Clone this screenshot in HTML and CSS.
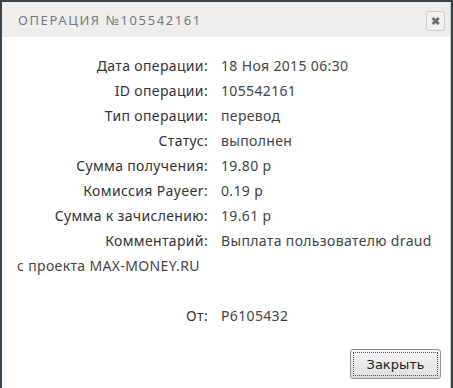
FILE: index.html
```html
<!DOCTYPE html>
<html lang="ru">
<head>
    <meta charset="UTF-8">
    <title>Операция №105542161</title>
    <link rel="stylesheet" href="styles.css">
</head>
<body>
    <div class="dialog">
        <div class="dialog-header">
            <h2>Операция №105542161</h2>
            <button class="close-btn" title="Закрыть">&#10006;</button>
        </div>
        <div class="dialog-body">
            <div class="row"><span class="label">Дата операции:</span>18 Ноя 2015 06:30</div>
            <div class="row"><span class="label">ID операции:</span>105542161</div>
            <div class="row"><span class="label">Тип операции:</span>перевод</div>
            <div class="row"><span class="label">Статус:</span>выполнен</div>
            <div class="row"><span class="label">Сумма получения:</span>19.80 р</div>
            <div class="row"><span class="label">Комиссия Payeer:</span>0.19 р</div>
            <div class="row"><span class="label">Сумма к зачислению:</span>19.61 р</div>
            <div class="row"><span class="label">Комментарий:</span>Выплата пользователю draud<br>с проекта MAX-MONEY.RU</div>
            <div class="row empty"></div>
            <div class="row"><span class="label">От:</span>P6105432</div>
        </div>
        <div class="dialog-footer">
            <button class="btn">Закрыть</button>
        </div>
    </div>
</body>
</html>
```

FILE: styles.css
```css
body {
    margin: 0;
    background: #37464e;
    font-family: "Noto Sans", Arial, sans-serif;
}

.dialog {
    margin: 2px 2px 0 2px;
    height: 386px;
    background: white;
    border-right: 1px solid #c8c8c8;
    display: flex;
    flex-direction: column;
}

.dialog-header {
    background: #eeeeee;
    height: 35px;
    display: flex;
    align-items: center;
    padding: 0 5px 0 16px;
}

.dialog-header h2 {
    margin: 0;
    flex: 1;
    font-size: 13px;
    font-weight: normal;
    text-transform: uppercase;
    letter-spacing: 1.6px;
    color: #7a7a7a;
}

.close-btn {
    width: 19px;
    height: 20px;
    margin-top: 2px;
    padding: 0;
    border: 1px solid #cfcfcf;
    border-radius: 3px;
    background: #f2f2f2;
    color: #6f6f6f;
    font-size: 11px;
    font-weight: bold;
    line-height: 18px;
    cursor: pointer;
}

.dialog-body {
    flex: 1;
    padding: 16px 15px 0 15px;
    font-size: 14px;
    letter-spacing: 0.35px;
    color: #444;
}

.row {
    line-height: 25px;
}

.row.empty {
    height: 25px;
}

.label {
    float: left;
    width: 204px;
    padding-right: 13px;
    box-sizing: border-box;
    text-align: right;
    color: #333;
}

.dialog-footer {
    display: flex;
    justify-content: flex-end;
    padding: 0 9px 9px 0;
}

.btn {
    width: 91px;
    height: 30px;
    font-family: "DejaVu Sans", Tahoma, sans-serif;
    font-size: 13px;
    color: #222;
    border: 1px solid #8f8f8f;
    border-radius: 3px;
    background: linear-gradient(#f7f7f7, #dedede);
    outline: 1px dotted #555;
    outline-offset: -4px;
    cursor: pointer;
}
```
